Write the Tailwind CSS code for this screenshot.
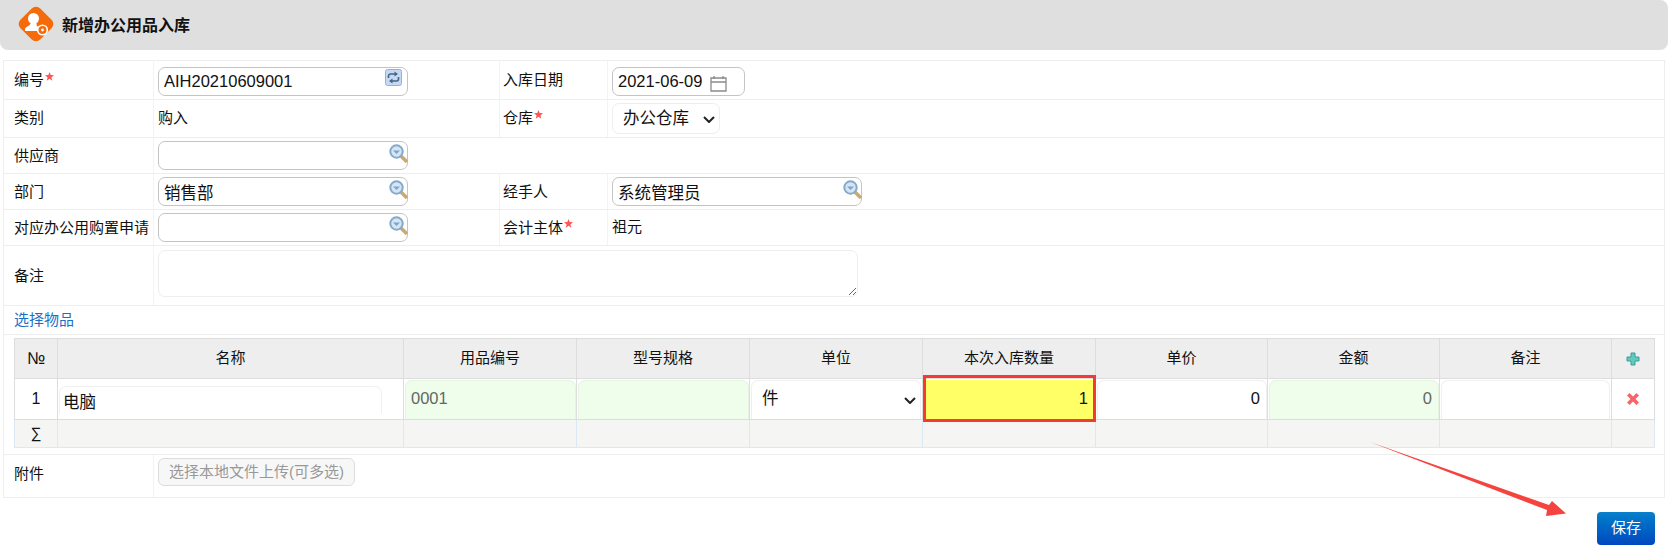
<!DOCTYPE html>
<html lang="zh-CN">
<head>
  <meta charset="UTF-8" />
  <meta name="viewport" content="width=device-width, initial-scale=1" />
  <title>新增办公用品入库</title>
  <script src="https://cdn.jsdelivr.net/npm/@tailwindcss/browser@4"></script>
</head>
<body class="relative h-[546px] overflow-hidden bg-white text-[15px] text-[#111] font-['Liberation_Sans','Noto_Sans_CJK_SC',sans-serif]">
  <!-- 标题 -->
  <header class="h-[50px] mr-[1px] flex items-center gap-[6px] pl-[16px] bg-[#dfdfdf] rounded-b-[8px] rounded-tr-[8px]">
    <svg class="mb-[3px]" width="40" height="40" viewBox="0 0 40 40">
      <rect x="6" y="6" width="28" height="28" rx="6" transform="rotate(45 20 20)" fill="#f56b0a" />
      <circle cx="17.500" cy="14.500" r="5.500" fill="#fff" />
      <path d="M15 18h5l1 4 3 2v3H9v-2c1-3 6-3 6-7z" fill="#fff" />
      <circle cx="26.500" cy="26" r="4.800" fill="#f56b0a" stroke="#fff" stroke-width="1.600" />
      <circle cx="26.500" cy="26" r="1.400" fill="#fff" />
    </svg>
    <h1 class="mt-[2px] text-[16px] font-bold">新增办公用品入库</h1>
  </header>

  <!-- 表单 -->
  <form class="mt-[10px] mx-[3px] w-[1662px] border border-[#eee]">
    <div class="flex h-[39px] border-b border-[#eee]">
      <div class="w-[150px] pl-[10px] pt-[1px] flex items-center border-r border-[#f3f3f3]">编号<svg class="mb-[9px] ml-[1px]" width="9" height="9" viewBox="0 0 10 10"><polygon points="5,0 6.3,3.4 10,3.7 7.1,6 8.1,9.6 5,7.6 1.9,9.6 2.9,6 0,3.7 3.7,3.4" fill="#f55" /></svg></div>
      <div class="w-[346px] pl-[4px] pt-[6px] border-r border-[#f3f3f3]">
        <div class="relative w-[250px]">
          <input value="AIH20210609001" class="w-full h-[29px] pl-[5px] pr-[28px] text-[16.5px] border border-[#c4c4c4] rounded-[7px] outline-none" />
          <svg class="absolute right-[6px] top-[2px]" width="17" height="17" viewBox="0 0 17 17">
            <rect x="0.5" y="0.5" width="16" height="16" rx="2" fill="#c5d9f6" stroke="#8fb2e4" />
            <path d="M3.500 9V7a2 2 0 0 1 2-2H10M13.500 8v2a2 2 0 0 1-2 2H7" fill="none" stroke="#46657f" stroke-width="1.600" />
            <path d="M9.500 2.500l3.500 2.500-3.500 2.500zM7.500 9.500L4 12l3.500 2.500z" fill="#46657f" />
          </svg>
        </div>
      </div>
      <div class="w-[108px] pl-[3px] pt-[1px] flex items-center border-r border-[#f3f3f3]">入库日期</div>
      <div class="pl-[4px] pt-[6px]">
        <div class="relative w-[133px]">
          <input value="2021-06-09" class="w-full h-[29px] pl-[5px] text-[16.5px] border border-[#c4c4c4] rounded-[7px] outline-none" />
          <svg class="absolute left-[98px] top-[8px]" width="17" height="17" viewBox="0 0 17 17" fill="none" stroke="#8a8a8a" stroke-width="1.3">
            <path d="M1 3h15v13H1zM1 7h15M4 1v3M13 1v3" />
          </svg>
        </div>
      </div>
    </div>

    <div class="flex h-[38px] border-b border-[#eee]">
      <div class="w-[150px] pl-[10px] flex items-center border-r border-[#f3f3f3]">类别</div>
      <div class="w-[346px] pl-[4px] flex items-center border-r border-[#f3f3f3]">购入</div>
      <div class="w-[108px] pl-[3px] flex items-center border-r border-[#f3f3f3]">仓库<svg class="mb-[9px] ml-[1px]" width="9" height="9" viewBox="0 0 10 10"><polygon points="5,0 6.3,3.4 10,3.7 7.1,6 8.1,9.6 5,7.6 1.9,9.6 2.9,6 0,3.7 3.7,3.4" fill="#f55" /></svg></div>
      <div class="pl-[4px] pt-[3px]">
        <div class="relative w-[108px]">
          <select class="appearance-none block w-full h-[31px] pl-[10px] text-[16.5px] bg-white border border-[#eee] rounded-[7px] outline-none">
            <option>办公仓库</option>
          </select>
          <svg class="absolute left-[91px] top-[13px]" width="12" height="7" viewBox="0 0 12 7" fill="none" stroke="#222" stroke-width="2"><path d="M1 1l5 5 5-5" /></svg>
        </div>
      </div>
    </div>

    <div class="flex h-[36px] border-b border-[#eee]">
      <div class="w-[150px] pl-[10px] pt-[1px] flex items-center border-r border-[#f3f3f3]">供应商</div>
      <div class="pl-[4px] pt-[3px]">
        <div class="relative w-[250px]">
          <input class="w-full h-[29px] pl-[5px] pr-[28px] text-[16.5px] border border-[#c4c4c4] rounded-[7px] outline-none" />
          <svg class="absolute right-0 top-[3px]" width="19" height="19" viewBox="0 0 19 19">
            <path d="M11 11l7 7" stroke="#cda96f" stroke-width="3.600" />
            <circle cx="7.500" cy="7.500" r="6.200" fill="#d6e5f3" stroke="#84a9ca" stroke-width="2" />
            <path d="M4 6.500h7l-3.500 3.500z" fill="#7ba5cd" />
          </svg>
        </div>
      </div>
    </div>

    <div class="flex h-[36px] border-b border-[#eee]">
      <div class="w-[150px] pl-[10px] pt-[1px] flex items-center border-r border-[#f3f3f3]">部门</div>
      <div class="w-[346px] pl-[4px] pt-[3px] border-r border-[#f3f3f3]">
        <div class="relative w-[250px]">
          <input value="销售部" class="w-full h-[29px] pl-[5px] pr-[28px] text-[16.5px] border border-[#c4c4c4] rounded-[7px] outline-none" />
          <svg class="absolute right-0 top-[3px]" width="19" height="19" viewBox="0 0 19 19">
            <path d="M11 11l7 7" stroke="#cda96f" stroke-width="3.600" />
            <circle cx="7.500" cy="7.500" r="6.200" fill="#d6e5f3" stroke="#84a9ca" stroke-width="2" />
            <path d="M4 6.500h7l-3.500 3.500z" fill="#7ba5cd" />
          </svg>
        </div>
      </div>
      <div class="w-[108px] pl-[3px] pt-[1px] flex items-center border-r border-[#f3f3f3]">经手人</div>
      <div class="pl-[4px] pt-[3px]">
        <div class="relative w-[250px]">
          <input value="系统管理员" class="w-full h-[29px] pl-[5px] pr-[28px] text-[16.5px] border border-[#c4c4c4] rounded-[7px] outline-none" />
          <svg class="absolute right-0 top-[3px]" width="19" height="19" viewBox="0 0 19 19">
            <path d="M11 11l7 7" stroke="#cda96f" stroke-width="3.600" />
            <circle cx="7.500" cy="7.500" r="6.200" fill="#d6e5f3" stroke="#84a9ca" stroke-width="2" />
            <path d="M4 6.500h7l-3.500 3.500z" fill="#7ba5cd" />
          </svg>
        </div>
      </div>
    </div>

    <div class="flex h-[36px] border-b border-[#eee]">
      <div class="w-[150px] pl-[10px] pt-[1px] flex items-center border-r border-[#f3f3f3]">对应办公用购置申请</div>
      <div class="w-[346px] pl-[4px] pt-[3px] border-r border-[#f3f3f3]">
        <div class="relative w-[250px]">
          <input class="w-full h-[29px] pl-[5px] pr-[28px] text-[16.5px] border border-[#c4c4c4] rounded-[7px] outline-none" />
          <svg class="absolute right-0 top-[3px]" width="19" height="19" viewBox="0 0 19 19">
            <path d="M11 11l7 7" stroke="#cda96f" stroke-width="3.600" />
            <circle cx="7.500" cy="7.500" r="6.200" fill="#d6e5f3" stroke="#84a9ca" stroke-width="2" />
            <path d="M4 6.500h7l-3.500 3.500z" fill="#7ba5cd" />
          </svg>
        </div>
      </div>
      <div class="w-[108px] pl-[3px] pt-[1px] flex items-center border-r border-[#f3f3f3]">会计主体<svg class="mb-[9px] ml-[1px]" width="9" height="9" viewBox="0 0 10 10"><polygon points="5,0 6.3,3.4 10,3.7 7.1,6 8.1,9.6 5,7.6 1.9,9.6 2.9,6 0,3.7 3.7,3.4" fill="#f55" /></svg></div>
      <div class="pl-[4px] flex items-center">祖元</div>
    </div>

    <div class="flex h-[60px] border-b border-[#eee]">
      <div class="w-[150px] pl-[10px] pt-[1px] flex items-center border-r border-[#f3f3f3]">备注</div>
      <div class="pl-[4px] pt-[4px]">
        <textarea class="block w-[700px] h-[47px] border border-[#eee] rounded-[7px] outline-none"></textarea>
      </div>
    </div>

    <div class="h-[29px] pl-[10px] flex items-center border-b border-[#eee] text-[#1c6fc6]">选择物品</div>

    <!-- 物品表格 -->
    <div class="h-[120px] pt-[3px] pl-[10px] border-b border-[#eee]">
      <table class="w-[1640px] table-fixed border-collapse">
        <colgroup>
          <col class="w-[43px]" /><col class="w-[346px]" /><col class="w-[173px]" /><col class="w-[173px]" /><col class="w-[173px]" /><col class="w-[173px]" /><col class="w-[172px]" /><col class="w-[172px]" /><col class="w-[172px]" /><col class="w-[43px]" />
        </colgroup>
        <thead>
          <tr class="h-[40px] bg-[#eee]">
            <th class="border border-[#ddd] text-[17px] font-normal">№</th>
            <th class="border border-[#ddd] font-normal">名称</th>
            <th class="border border-[#ddd] font-normal">用品编号</th>
            <th class="border border-[#ddd] font-normal">型号规格</th>
            <th class="border border-[#ddd] font-normal">单位</th>
            <th class="border border-[#ddd] font-normal">本次入库数量</th>
            <th class="border border-[#ddd] font-normal">单价</th>
            <th class="border border-[#ddd] font-normal">金额</th>
            <th class="border border-[#ddd] font-normal">备注</th>
            <th class="border border-[#ddd] font-normal">
              <svg class="mx-auto" width="14" height="14" viewBox="0 0 14 14"><path d="M5 1h4v4h4v4H9v4H5V9H1V5h4z" fill="#62c9bf" stroke="#3a9d96" /></svg>
            </th>
          </tr>
        </thead>
        <tbody>
          <tr class="h-[41px]">
            <td class="border border-[#ddd] text-center text-[16px]">1</td>
            <td class="border border-[#ddd] p-0 align-top"><input value="电脑" class="block w-[323px] h-[28px] mt-[7px] ml-[1px] pl-[3px] text-[16.5px] border-t border-x border-[#f0f0f0] rounded-t-[7px] outline-none" /></td>
            <td class="border border-[#ddd] p-0 align-bottom"><input value="0001" class="block w-[171px] h-[39px] ml-[1px] pl-[5px] pb-[3px] text-[16.5px] text-[#666] bg-[#eefeeb] border-t border-x border-[#e6f3e3] rounded-t-[7px] outline-none" /></td>
            <td class="border border-[#ddd] p-0 align-bottom"><input class="block w-[171px] h-[39px] ml-[1px] bg-[#eefeeb] border-t border-x border-[#e6f3e3] rounded-t-[7px] outline-none" /></td>
            <td class="border border-[#ddd] p-0 align-bottom">
              <div class="relative">
                <select class="appearance-none block w-[170px] h-[39px] ml-[1px] pl-[10px] pb-[3px] text-[16.5px] bg-white border-t border-x border-[#f0f0f0] rounded-t-[7px] outline-none"><option>件</option></select>
                <svg class="absolute left-[154px] top-[17px]" width="12" height="7" viewBox="0 0 12 7" fill="none" stroke="#222" stroke-width="2"><path d="M1 1l5 5 5-5" /></svg>
              </div>
            </td>
            <td class="relative border border-[#ddd] p-0 align-bottom">
              <input value="1" class="block w-[170px] h-[39px] ml-[1px] pr-[6px] pb-[3px] text-right text-[16.5px] bg-[#ffff66] outline-none" />
              <div class="absolute left-0 right-[-1px] top-[-4px] bottom-[-3px] border-[3px] border-[#f33a36]"></div>
            </td>
            <td class="border border-[#ddd] p-0 align-bottom"><input value="0" class="block w-[170px] h-[39px] ml-[1px] pr-[6px] pb-[3px] text-right text-[16.5px] border-t border-x border-[#f0f0f0] rounded-t-[7px] outline-none" /></td>
            <td class="border border-[#ddd] p-0 align-bottom"><input value="0" class="block w-[170px] h-[39px] ml-[1px] pr-[6px] pb-[3px] text-right text-[16.5px] text-[#666] bg-[#eefeeb] border-t border-x border-[#e6f3e3] rounded-t-[7px] outline-none" /></td>
            <td class="border border-[#ddd] p-0 align-bottom"><input class="block w-[169px] h-[39px] ml-[1px] border-t border-x border-[#f0f0f0] rounded-t-[7px] outline-none" /></td>
            <td class="border border-[#ddd]">
              <svg class="mx-auto" width="14" height="14" viewBox="0 0 14 14"><path d="M1 3.500L3.500 1 7 4.500 10.500 1 13 3.500 9.500 7 13 10.500 10.500 13 7 9.500 3.500 13 1 10.500 4.500 7z" fill="#f9646a" /></svg>
            </td>
          </tr>
          <tr class="h-[28px] bg-[#f5f5f3]">
            <td class="border border-[#dbe8f5] border-t-[#ddd] text-center">∑</td>
            <td class="border border-[#dbe8f5] border-t-[#ddd]"></td>
            <td class="border border-[#dbe8f5] border-t-[#ddd]"></td>
            <td class="border border-[#dbe8f5] border-t-[#ddd]"></td>
            <td class="border border-[#dbe8f5] border-t-[#ddd]"></td>
            <td class="border border-[#dbe8f5] border-t-[#ddd]"></td>
            <td class="border border-[#dbe8f5] border-t-[#ddd]"></td>
            <td class="border border-[#dbe8f5] border-t-[#ddd]"></td>
            <td class="border border-[#dbe8f5] border-t-[#ddd]"></td>
            <td class="border border-[#dbe8f5] border-t-[#ddd]"></td>
          </tr>
        </tbody>
      </table>
    </div>

    <div class="flex h-[42px]">
      <div class="w-[150px] pl-[10px] pb-[3px] flex items-center border-r border-[#f3f3f3]">附件</div>
      <div class="pl-[4px] pt-[3px]">
        <button type="button" class="w-[197px] h-[28px] text-[#999] bg-[#f7f7f7] border border-[#ddd] rounded-[6px]">选择本地文件上传(可多选)</button>
      </div>
    </div>
  </form>

  <div class="w-[1655px] mt-[14px] flex justify-end">
    <button type="button" class="w-[58px] h-[33px] text-white rounded-[4px] bg-gradient-to-b from-[#0a7fcb] to-[#0047bf]">保存</button>
  </div>

  <!-- 标注箭头 -->
  <svg class="absolute left-0 top-0 pointer-events-none" width="1669" height="546">
    <polygon points="1370,442 1549,505 1552,501 1566,513.500 1546,516 1547,510" fill="#f5433f" />
  </svg>
</body>
</html>
